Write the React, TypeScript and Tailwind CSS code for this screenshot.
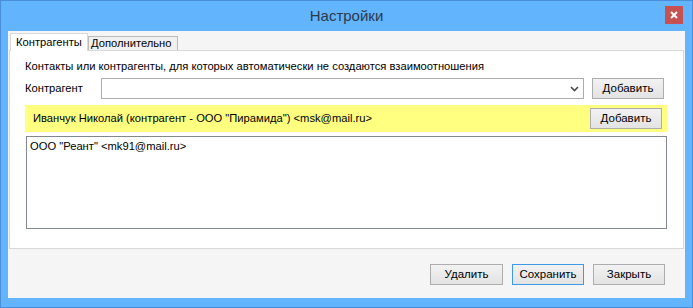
import React from 'react';

const font = { fontFamily: '"Liberation Sans", Arial, sans-serif' };

const WinButton: React.FC<{ label: string; focused?: boolean; className?: string }> = ({ label, focused, className }) => (
  <button
    className={`h-[21px] flex items-center justify-center text-[11.5px] text-black bg-gradient-to-b from-[#f2f2f2] to-[#e3e3e3] border ${
      focused ? 'border-[#3c9ae8]' : 'border-[#adadad]'
    } ${className ?? ''}`}
  >
    {label}
  </button>
);

export default function App() {
  return (
    <div style={font} className="w-[693px] h-[308px] bg-[#62b4fc] border border-[#4a8ed8] flex flex-col overflow-hidden">
      {/* Title bar */}
      <div className="h-[30px] relative flex items-center justify-center">
        <span className="text-[15px] text-[#2b3a4a] mt-[1px]">Настройки</span>
        <button className="absolute right-[9px] top-[5px] w-[18px] h-[18px] bg-[#c75050] flex items-center justify-center">
          <svg width="8" height="8" viewBox="0 0 8 8">
            <path d="M1 1 L7 7 M7 1 L1 7" stroke="#fff" strokeWidth="2" />
          </svg>
        </button>
      </div>

      {/* Client area */}
      <div className="ml-[7px] mr-[7px] h-[267px] bg-[#f5f5f5] flex flex-col text-[11.2px] text-black">
        {/* Tabs */}
        <div className="flex items-end pl-[2px] h-[19px] relative z-10">
          <div className="w-[78px] h-[18px] -mb-[1px] bg-white border border-b-0 border-[#d9d9d9] pl-[5px] flex items-center">
            Контрагенты
          </div>
          <div className="w-[90px] h-[14px] bg-[#f0f0f0] border border-b-0 border-[#bcbcbc] pl-[2px] pt-[1px] flex items-center leading-none">
            Дополнительно
          </div>
        </div>

        {/* Tab panel */}
        <div className="mx-[1px] h-[199px] bg-white border border-[#d9d9d9] flex flex-col px-[15px] pt-[7px]">
          <div className="leading-[16px]">
            Контакты или контрагенты, для которых автоматически не создаются взаимоотношения
          </div>
          <div className="flex items-center mt-[4px] h-[21px]">
            <span className="w-[76px]">Контрагент</span>
            <div className="w-[483px] h-[21px] border border-[#abadb3] flex items-center justify-end pr-[4px]">
              <svg width="9" height="6" viewBox="0 0 9 6">
                <path d="M1 1 L4.5 4.5 L8 1" stroke="#4a4a4a" strokeWidth="1.6" fill="none" />
              </svg>
            </div>
            <WinButton label="Добавить" className="ml-[8px] w-[72px]" />
          </div>
          <div className="mt-[6px] h-[27px] w-[642px] bg-[#ffff80] flex items-center justify-between pl-[8px] pr-[5px]">
            <span>Иванчук Николай (контрагент - ООО "Пирамида") &lt;msk@mail.ru&gt;</span>
            <WinButton label="Добавить" className="w-[72px]" />
          </div>
          <div className="mt-[4px] ml-[1px] w-[641px] h-[93px] border border-[#828790] px-[3px] pt-[1px]">
            <div className="leading-[16px]">ООО "Реант" &lt;mk91@mail.ru&gt;</div>
          </div>
        </div>

        {/* Footer */}
        <div className="flex justify-end gap-[9px] pr-[20px] pt-[15px]">
          <WinButton label="Удалить" className="w-[73px]" />
          <WinButton label="Сохранить" focused className="w-[72px]" />
          <WinButton label="Закрыть" className="w-[72px]" />
        </div>
      </div>
    </div>
  );
}
